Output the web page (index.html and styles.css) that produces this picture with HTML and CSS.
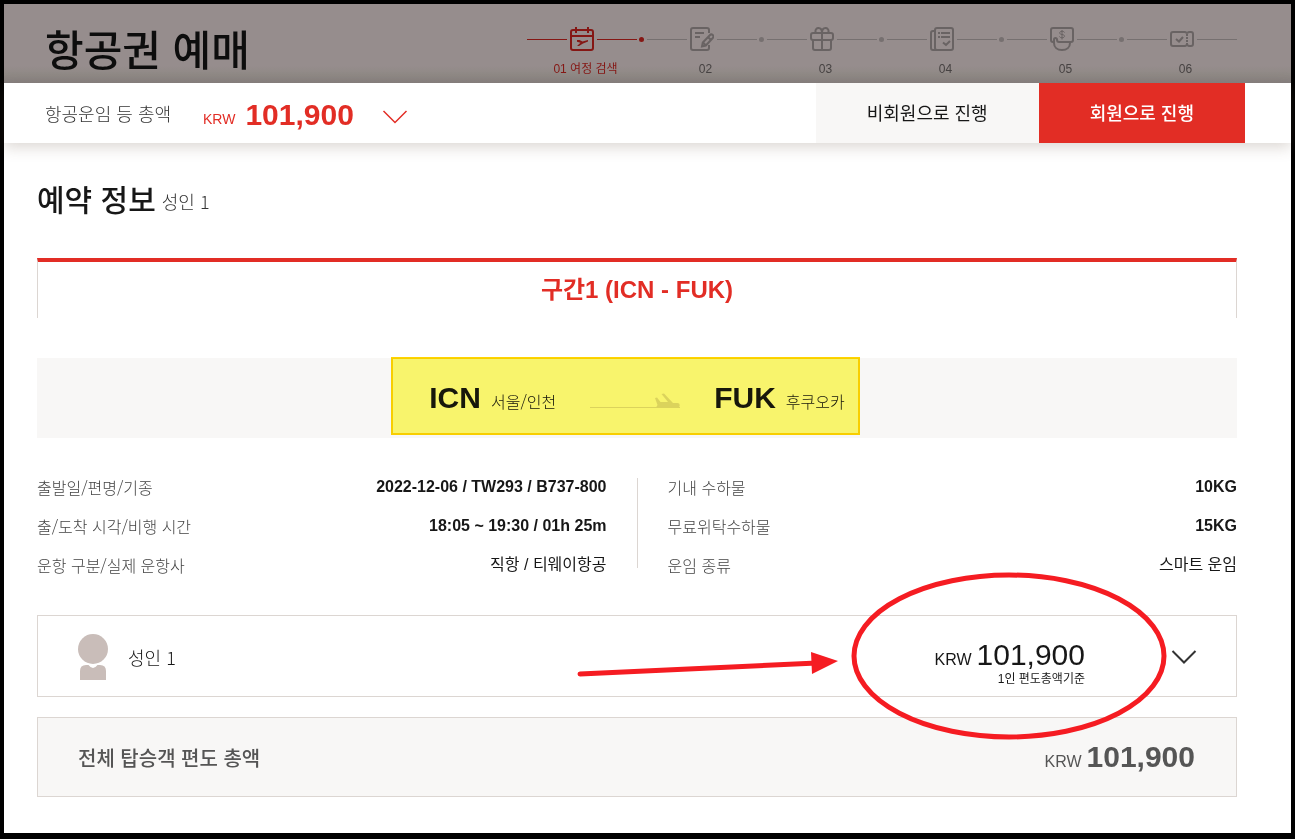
FILE: index.html
```html
<!DOCTYPE html>
<html lang="ko">
<head>
<meta charset="utf-8">
<meta name="viewport" content="width=device-width, initial-scale=1">
<title>항공권 예매</title>
<link rel="stylesheet" href="styles.css">
</head>
<body>
<div class="frame">
  <header class="header">
    <h1 class="header-title">항공권 예매</h1>
    <ol class="steps">
      <li class="step step-active">
        <div class="step-track">
          <span class="step-line"></span>
          <svg class="step-icon" viewBox="0 0 24 24"><rect x="1" y="3" width="22" height="20" rx="2"/><path d="M1 9h22M6 0v6M18 0v6"/><path class="solid" d="M7 13h2.500l3 1.500 5.500-1.500v1.500l-5 2-4 2.500H7l3.500-3.200-3.500-1z"/></svg>
          <span class="step-line"></span><span class="step-dot"></span>
        </div>
        <span class="step-label">01 여정 검색</span>
      </li>
      <li class="step">
        <div class="step-track">
          <span class="step-line"></span>
          <svg class="step-icon" viewBox="0 0 24 24"><path d="M19 6V3a2 2 0 0 0-2-2H3a2 2 0 0 0-2 2v18a2 2 0 0 0 2 2h14a2 2 0 0 0 2-2v-3M5 6h9M5 10h5"/><path d="M12 19.500l.8-4 7-7.300a2 2 0 0 1 3 2.800l-7 7.500zM18 10l3 3M13 15.500l3 3"/></svg>
          <span class="step-line"></span><span class="step-dot"></span>
        </div>
        <span class="step-label">02</span>
      </li>
      <li class="step">
        <div class="step-track">
          <span class="step-line"></span>
          <svg class="step-icon" viewBox="0 0 24 24"><rect x="1" y="6" width="22" height="7" rx="2"/><path d="M3 13v8a2 2 0 0 0 2 2h14a2 2 0 0 0 2-2v-8M12 6v17M5.500 6V4.500a3 3 0 0 1 3-3.500C11 1 12 3.500 12 6c0-2.500 1-5 3.500-5a3 3 0 0 1 3 3.500V6"/></svg>
          <span class="step-line"></span><span class="step-dot"></span>
        </div>
        <span class="step-label">03</span>
      </li>
      <li class="step">
        <div class="step-track">
          <span class="step-line"></span>
          <svg class="step-icon" viewBox="0 0 24 24"><rect x="5" y="1" width="18" height="22" rx="2"/><path d="M5 4H3a2 2 0 0 0-2 2v15a2 2 0 0 0 2 2h4M8 6h2M11 6h9M8 10h2M11 10h9M13 15.500l3 2.500 4-4"/></svg>
          <span class="step-line"></span><span class="step-dot"></span>
        </div>
        <span class="step-label">04</span>
      </li>
      <li class="step">
        <div class="step-track">
          <span class="step-line"></span>
          <svg class="step-icon" viewBox="0 0 24 24"><path d="M3 15a2 2 0 0 1-2-2V3a2 2 0 0 1 2-2h18a2 2 0 0 1 2 2v10a2 2 0 0 1-2 2H9c-1.500 0-2-.8-2-2.500a1.500 1.500 0 0 0-3 0V16c0 4 3 7 8 7s8-3 8-7"/><path class="fine" d="M14.500 5.500c-.5-1-1.500-1.200-2.500-1.200-3 0-3.200 3 0 3.200 3.500.2 3.200 3.300 0 3.300-1.200 0-2-.4-2.600-1.300M12 3v9.500"/></svg>
          <span class="step-line"></span><span class="step-dot"></span>
        </div>
        <span class="step-label">05</span>
      </li>
      <li class="step">
        <div class="step-track">
          <span class="step-line"></span>
          <svg class="step-icon" viewBox="0 0 24 24"><path d="M3 5h12l2 1 2-1h2a2 2 0 0 1 2 2v10a2 2 0 0 1-2 2h-2l-2-1-2 1H3a2 2 0 0 1-2-2V7a2 2 0 0 1 2-2zM6 12l3 2.500L13 10"/><path d="M17 7v11" stroke-dasharray="2 1"/></svg>
          <span class="step-line"></span>
        </div>
        <span class="step-label">06</span>
      </li>
    </ol>
  </header>

  <div class="fare-bar">
    <span class="fare-label">항공운임 등 총액</span>
    <span class="fare-currency">KRW</span>
    <strong class="fare-amount">101,900</strong>
    <button class="toggle toggle-red" type="button" aria-label="운임 상세 보기"><svg class="chevron" viewBox="0 0 26 14"><path d="M1.500 1L13 12.500 24.500 1"/></svg></button>
    <div class="fare-actions">
      <button class="action action-guest" type="button">비회원으로 진행</button>
      <button class="action action-member" type="button">회원으로 진행</button>
    </div>
  </div>

  <main class="content">
    <div class="heading">
      <h2 class="heading-title">예약 정보</h2>
      <span class="heading-note">성인 1</span>
    </div>

    <h3 class="segment">구간1 (ICN - FUK)</h3>

    <div class="route">
      <div class="route-inner">
        <div class="airport"><strong class="airport-code">ICN</strong><span class="airport-city">서울/인천</span></div>
        <svg class="route-plane" viewBox="0 0 90 16"><path class="route-line" d="M0 14.500h90"/><path d="M65 5l2-.5 3.500 4.500h7.500L71.500 1l2.500-.5L83 10h4.500a2.200 2.200 0 0 1 0 4.500H66l1.500-2.500z"/></svg>
        <div class="airport"><strong class="airport-code">FUK</strong><span class="airport-city">후쿠오카</span></div>
        <div class="highlight"></div>
      </div>
    </div>

    <div class="details">
      <dl class="detail-list">
        <div class="detail"><dt>출발일/편명/기종</dt><dd>2022-12-06 / TW293 / B737-800</dd></div>
        <div class="detail"><dt>출/도착 시각/비행 시간</dt><dd>18:05 ~ 19:30 / 01h 25m</dd></div>
        <div class="detail"><dt>운항 구분/실제 운항사</dt><dd class="korean">직항 / 티웨이항공</dd></div>
      </dl>
      <div class="details-divider"></div>
      <dl class="detail-list">
        <div class="detail"><dt>기내 수하물</dt><dd>10KG</dd></div>
        <div class="detail"><dt>무료위탁수하물</dt><dd>15KG</dd></div>
        <div class="detail"><dt>운임 종류</dt><dd class="korean">스마트 운임</dd></div>
      </dl>
    </div>

    <section class="passenger">
      <svg class="avatar" viewBox="0 0 30 46"><circle cx="15" cy="15" r="15"/><path d="M2 46V37q0-6 6-6h2.500q4.500 6 9 0H22q6 0 6 6v9z"/></svg>
      <span class="passenger-name">성인 1</span>
      <div class="passenger-fare">
        <div class="price"><span class="price-currency">KRW</span><span class="price-amount">101,900</span></div>
        <div class="price-note">1인 편도총액기준</div>
      </div>
      <button class="toggle" type="button" aria-label="성인 운임 상세 보기"><svg class="chevron" viewBox="0 0 26 14"><path d="M1.500 1L13 12.500 24.500 1"/></svg></button>
      <svg class="marker" viewBox="0 0 594 170"><path class="marker-stroke" d="M5 102L242 91"/><path class="marker-head" d="M236 80l27 9-26 13z"/><ellipse class="marker-stroke" cx="434" cy="84" rx="155" ry="81"/></svg>
    </section>

    <section class="total">
      <span class="total-label">전체 탑승객 편도 총액</span>
      <div class="price"><span class="price-currency">KRW</span><strong class="price-amount">101,900</strong></div>
    </section>
  </main>
</div>
</body>
</html>
```
FILE: styles.css
```css
* {
  box-sizing: border-box;
}

body {
  margin: 0;
  font-family: "Liberation Sans", "Noto Sans CJK KR", sans-serif;
  color: #171717;
  background: #fff;
}

h1, h2, h3, ol, dl, dd {
  margin: 0;
  padding: 0;
}

button {
  border: 0;
  padding: 0;
  font: inherit;
  cursor: pointer;
}

.frame {
  min-height: 100vh;
  border: 4px solid #000;
  border-bottom-width: 6px;
}

/* Light Korean labels */
.fare-label,
.heading-note,
.airport-city,
.passenger-name,
.detail dt {
  font-family: "Noto Sans CJK KR", "Liberation Sans", sans-serif;
  font-weight: 300;
}

/* Header and progress steps */
.header {
  display: flex;
  align-items: flex-start;
  justify-content: space-between;
  height: 79px;
  padding: 0 44px 0 41px;
  background: linear-gradient(#968d8d 78%, #8f8985 90%, #868080);
}

.header-title {
  padding-top: 18px;
  font-size: 42px;
  font-weight: 500;
  line-height: 60px;
  color: #0d0d0d;
}

.steps {
  display: flex;
  padding-top: 23px;
  list-style: none;
  color: #464242;
}

.step {
  width: 120px;
  text-align: center;
}

.step-track {
  display: flex;
  align-items: center;
  color: #696363;
}

.step-line {
  width: 40px;
  height: 1px;
  background: #767070;
}

.step-icon {
  width: 24px;
  height: 24px;
  margin: 0 3px;
  fill: none;
  stroke: currentColor;
  stroke-width: 2;
}

.step-icon .solid {
  fill: currentColor;
  stroke: none;
}

.step-icon .fine {
  stroke-width: 1;
}

.step-dot {
  width: 5px;
  height: 5px;
  margin-left: 2px;
  border-radius: 50%;
  background: #767070;
}

.step-label {
  display: block;
  margin-top: 9px;
  padding-right: 3px;
  font-size: 12px;
  line-height: 18px;
}

.step-active .step-track,
.step-active .step-label {
  color: #851714;
}

.step-active .step-line,
.step-active .step-dot {
  background: #851714;
}

/* Fare bar */
.fare-bar {
  display: flex;
  align-items: center;
  min-height: 60px;
  padding: 0 46px 0 41px;
  background: #fff;
  box-shadow: 0 4px 14px rgba(90, 70, 50, 0.22);
}

.fare-label {
  font-size: 18px;
  line-height: 24px;
  color: #333;
}

.fare-currency {
  margin: 12px 10px 0 32px;
  font-size: 14px;
  color: #e22d25;
}

.fare-amount {
  margin-top: 4px;
  font-size: 30px;
  line-height: 36px;
  color: #e22d25;
}

.toggle {
  display: flex;
  background: none;
  color: #333;
}

.toggle-red {
  margin: 8px 0 0 28px;
  color: #e22d25;
}

.chevron {
  width: 26px;
  height: 14px;
  fill: none;
  stroke: currentColor;
  stroke-width: 2;
}

.toggle-red .chevron {
  stroke-width: 1.5;
}

.fare-actions {
  display: flex;
  align-self: stretch;
  margin-left: auto;
}

.action {
  padding: 0 51px 2px;
  font-size: 18px;
  white-space: nowrap;
}

.action-guest {
  background: #f8f7f6;
  color: #171717;
}

.action-member {
  background: #e22d25;
  color: #fff;
  font-weight: 500;
}

/* Booking information */
.content {
  padding: 38px 54px 36px 33px;
}

.heading {
  display: flex;
  align-items: center;
  gap: 6px;
}

.heading-title {
  font-size: 30px;
  font-weight: 500;
  line-height: 40px;
}

.heading-note {
  font-size: 18px;
  line-height: 24px;
  color: #333;
}

.segment {
  margin-top: 37px;
  border: 1px solid #dcd6d2;
  border-top: 4px solid #e22d25;
  border-bottom: 0;
  font-size: 24px;
  font-weight: 700;
  line-height: 56px;
  text-align: center;
  color: #e22d25;
}

.route {
  display: flex;
  justify-content: center;
  margin-top: 40px;
  background: #f8f7f6;
}

.route-inner {
  position: relative;
  display: flex;
  align-items: center;
  gap: 34px;
  height: 80px;
}

.airport {
  display: flex;
  align-items: baseline;
  gap: 10px;
}

.airport-code {
  font-size: 30px;
  line-height: 36px;
}

.airport-city {
  font-size: 16px;
  line-height: 24px;
}

.route-plane {
  width: 90px;
  height: 16px;
  margin-top: 6px;
  fill: #dbd6d1;
}

.route-line {
  stroke: #dbd6d1;
}

.highlight {
  position: absolute;
  inset: -1px -15px 3px -38px;
  border: 2px solid #ffd500;
  background: #fffc70;
  mix-blend-mode: multiply;
}

.details {
  display: grid;
  grid-template-columns: 1fr 1px 1fr;
  gap: 30px;
  margin-top: 40px;
}

.details-divider {
  height: 90px;
  background: #dcd6d2;
}

.detail-list {
  display: grid;
  gap: 21px;
}

.detail {
  display: flex;
  justify-content: space-between;
  font-size: 16px;
  line-height: 18px;
}

.detail dt {
  color: #444;
}

.detail dd {
  font-weight: 700;
}

.detail .korean {
  font-weight: 400;
}

/* Passenger fare */
.passenger {
  position: relative;
  display: flex;
  align-items: center;
  height: 82px;
  margin-top: 41px;
  padding: 2px 39px 0 40px;
  border: 1px solid #dcd6d2;
}

.avatar {
  width: 30px;
  height: 46px;
  fill: #c9bdb9;
}

.passenger-name {
  margin-left: 20px;
  font-size: 18px;
  line-height: 24px;
}

.passenger-fare {
  margin: 12px 86px 0 auto;
  text-align: right;
}

.price {
  display: flex;
  align-items: baseline;
  gap: 5px;
}

.price-currency {
  font-size: 16px;
}

.price-amount {
  font-size: 30px;
  line-height: 32px;
}

.price-note {
  font-size: 12px;
  line-height: 16px;
}

.marker {
  position: absolute;
  right: 67px;
  top: -44px;
  width: 594px;
  height: 170px;
  pointer-events: none;
}

.marker-stroke {
  fill: none;
  stroke: #f51c22;
  stroke-width: 5;
  stroke-linecap: round;
}

.marker-head {
  fill: #f51c22;
}

.total {
  display: flex;
  align-items: center;
  justify-content: space-between;
  height: 80px;
  margin-top: 20px;
  padding: 0 41px 0 40px;
  border: 1px solid #dcd6d2;
  background: #f8f7f6;
  color: #555;
}

.total-label {
  font-size: 20px;
  font-weight: 500;
}
```
